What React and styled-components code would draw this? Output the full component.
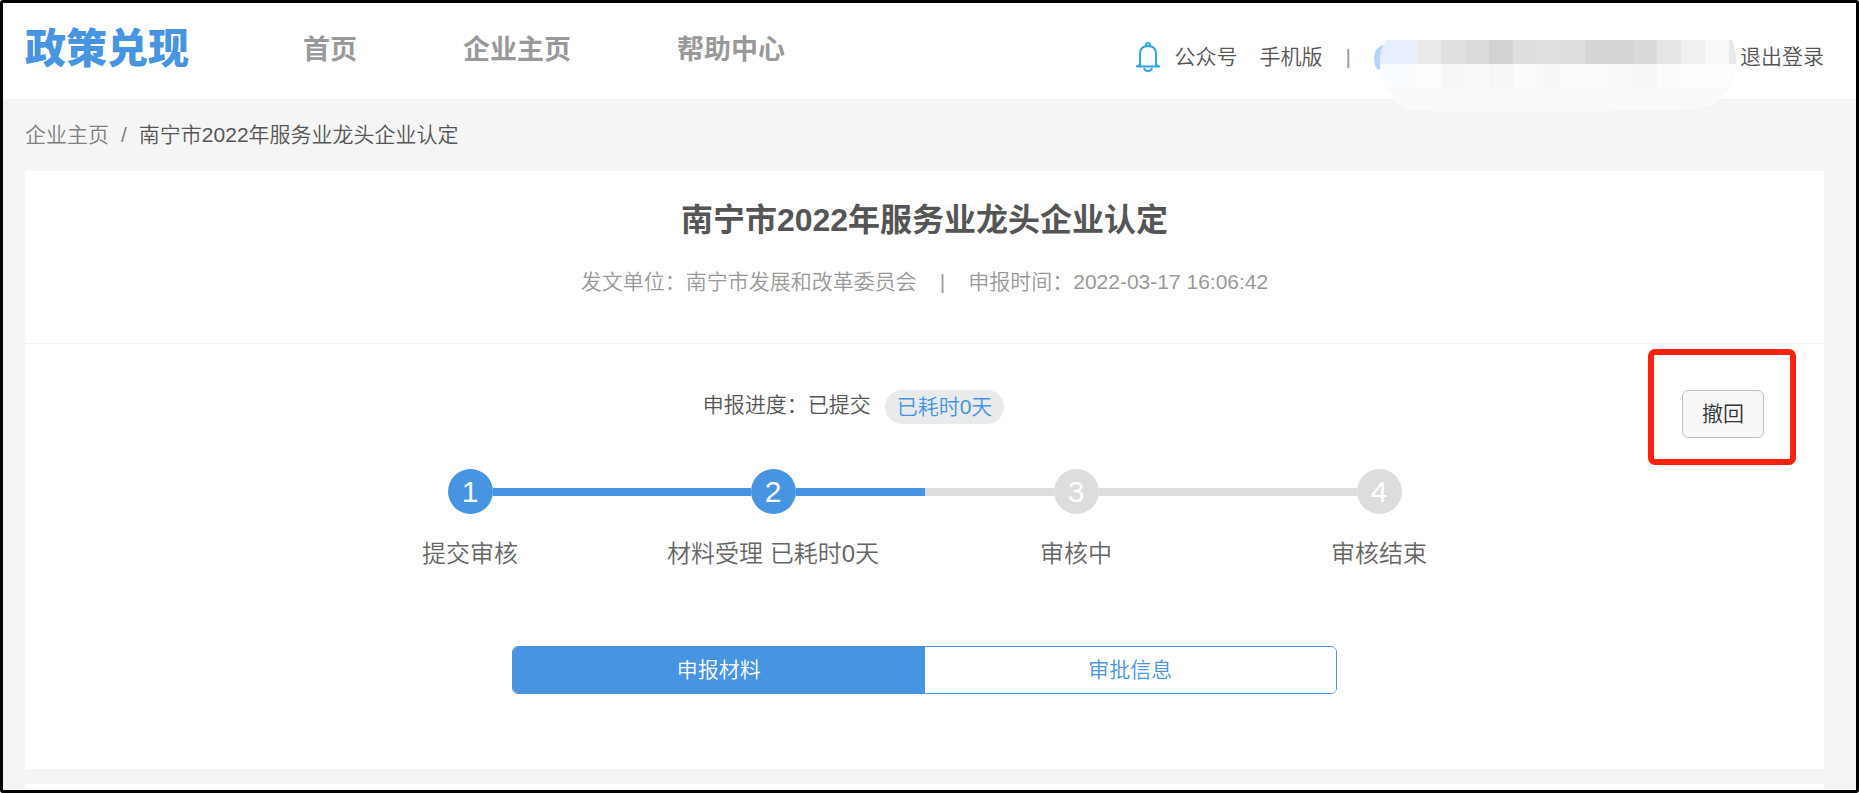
import React from 'react';
import styled, { createGlobalStyle } from 'styled-components';

const GlobalStyle = createGlobalStyle`
  * {
    box-sizing: border-box;
  }

  body {
    margin: 0;
    background: #fff;
    color: #555;
    font-family: 'Liberation Sans', 'Noto Sans CJK SC', sans-serif;
    font-size: 21px;
    font-weight: 350;
    line-height: 30px;
  }

  a {
    color: inherit;
    text-decoration: none;
  }

  button {
    font: inherit;
    cursor: pointer;
  }
`;

const Page = styled.div`
  display: flex;
  flex-direction: column;
  min-height: 100vh;
  border: 3px solid #000;
  border-radius: 3px;
  background: #f5f5f5;
`;

const Header = styled.header`
  display: flex;
  align-items: center;
  height: 96px;
  padding: 0 32px 0 22px;
  background: #fff;
  white-space: nowrap;
`;

const Logo = styled.a`
  padding-bottom: 4px;
  color: #4794e2;
  font-size: 41px;
  font-weight: 900;
  line-height: 48px;
`;

const Nav = styled.nav`
  display: flex;
  gap: 106px;
  margin-left: 114px;
  padding-bottom: 2px;
  color: #999;
  font-size: 27px;
  font-weight: bold;
`;

const Account = styled.div`
  display: flex;
  align-items: center;
  margin-left: auto;
  padding-top: 12px;
`;

const BellIcon = styled.svg`
  width: 24px;
  height: 30px;
  margin-right: 15px;
`;

const AccountLink = styled.a`
  margin-right: 22px;
`;

const Separator = styled.span`
  margin: 0 23px;
  color: #999;
`;

const UserName = styled.div`
  position: relative;
  width: 366px;
  height: 30px;
`;

const Mosaic = styled.svg`
  position: absolute;
  top: -28px;
  left: 0;
  width: 366px;
  height: 100px;
`;

const Breadcrumb = styled.nav`
  display: flex;
  gap: 12px;
  padding: 21px 22px;
`;

const Parent = styled.a`
  color: #808080;
`;

const Slash = styled.span`
  color: #808080;
`;

const Card = styled.section`
  margin: 0 32px 15px 22px;
  background: #fff;
`;

const NextCard = styled(Card)`
  flex: 1;
  min-height: 6px;
  margin-bottom: 0;
`;

const Heading = styled.div`
  padding: 26px 0 46px;
  border-bottom: 1px solid #f0f0f0;
  text-align: center;
`;

const Title = styled.h1`
  margin: 0 0 24px;
  font-size: 32px;
  font-weight: bold;
  line-height: 46px;
`;

const Meta = styled.div`
  display: flex;
  justify-content: center;
  color: #999;
`;

const Progress = styled.div`
  display: flex;
  align-items: flex-start;
  padding: 46px 60px 31px 0;
`;

const Status = styled.div`
  display: flex;
  flex: 1;
  justify-content: center;
  gap: 14px;
`;

const Elapsed = styled.span`
  height: 34px;
  padding: 0 12px;
  border-radius: 17px;
  background: #e8eaec;
  color: #4794e2;
  line-height: 34px;
`;

const Highlight = styled.div`
  position: relative;

  &::after {
    content: '';
    position: absolute;
    inset: -41px -32px -27px -34px;
    border: 6px solid #ff2010;
    border-radius: 7px;
    pointer-events: none;
  }
`;

const WithdrawButton = styled.button`
  width: 82px;
  height: 48px;
  padding: 0;
  border: 1px solid #bfc1c9;
  border-radius: 6px;
  background: #f7f7f8;
  color: #333;
`;

const Steps = styled.ol`
  display: flex;
  max-width: 1212px;
  margin: 0 auto;
  padding: 0;
  list-style: none;
`;

const Step = styled.li`
  flex: 1;
  color: #666;
  font-size: 24px;
  line-height: 36px;
  text-align: center;
`;

const Track = styled.div`
  display: flex;
  align-items: center;
  margin-bottom: 22px;
`;

const Line = styled.span`
  flex: 1;
  height: 8px;
  background: ${({ $state }) =>
    ({ done: '#4794e2', todo: '#ddd', none: 'transparent' })[$state]};
`;

const Dot = styled.span`
  width: 45px;
  height: 45px;
  border-radius: 50%;
  background: ${({ $done }) => ($done ? '#4794e2' : '#ddd')};
  color: #fff;
  font-size: 30px;
  line-height: 45px;
`;

const Tabs = styled.div`
  display: flex;
  max-width: 825px;
  margin: 74px auto 75px;
  border: 1px solid #4794e2;
  border-radius: 6px;
  overflow: hidden;
`;

const Tab = styled.button`
  flex: 1;
  height: 46px;
  padding: 0;
  border: 0;
  background: ${({ $active }) => ($active ? '#4794e2' : '#fff')};
  color: ${({ $active }) => ($active ? '#fff' : '#4794e2')};
`;

const steps = [
  { label: '提交审核', before: 'none', after: 'done', done: true },
  { label: '材料受理 已耗时0天', before: 'done', after: 'done', done: true },
  { label: '审核中', before: 'todo', after: 'todo' },
  { label: '审核结束', before: 'todo', after: 'none' },
];

const upperTiles = [
  '#e5efff', '#e8f0ff', '#ebeae8', '#dfe0e1', '#dbdcd9', '#d3d3d3', '#dedede', '#e0e0e0',
  '#dedede', '#d6d6d6', '#d4d4d4', '#dadada', '#e5e6e4', '#eff1f0', '#f9f9f9', '#e9e9e7',
];

const lowerTiles = [
  '#fafdff', '#fafdff', '#fdfdfd', '#f7f7f7', '#fafafa', '#f6f6f6', '#fbfbfb', '#f8f8f8',
  '#fafcfb', '#fafbfb', '#f9f9f9', '#f8f8f8', '#fcfcfc', '#fdfdfd', '#fdfdfd', '#fcfcfc',
];

function Bell() {
  return (
    <BellIcon viewBox="0 0 24 30" fill="none" stroke="#2fa3e0" strokeWidth="2" aria-hidden="true">
      <path d="M4 23V12c0-5 3-8 8-8s8 3 8 8v11l3 1.500H1z" strokeLinejoin="round" />
      <path d="M10 4V3a2 2 0 0 1 4 0v1M8 26c1 4 7 4 8 0" />
    </BellIcon>
  );
}

function MaskedName() {
  return (
    <Mosaic viewBox="0 0 366 100" aria-hidden="true">
      <clipPath id="brush">
        <path d="M12 26H358Q362 34 362 46C362 70 350 94 318 95L206 98H72L36 96C16 90 6 64 6 48Q6 36 12 26Z" />
      </clipPath>
      <path d="M9 31Q0 34 0 44Q0 52 4 56L8 54Z" fill="#b8d3ff" />
      <g clipPath="url(#brush)">
        <rect width="366" height="100" fill="#fafafa" />
        {upperTiles.map((fill, i) => (
          <rect key={i} x={i * 24 - 5} y="26" width="24" height="24" fill={fill} />
        ))}
        {lowerTiles.map((fill, i) => (
          <rect key={i} x={i * 24 - 5} y="50" width="24" height="24" fill={fill} />
        ))}
      </g>
    </Mosaic>
  );
}

function App() {
  return (
    <>
      <GlobalStyle />
      <Page>
        <Header>
          <Logo href="#">政策兑现</Logo>
          <Nav>
            <a href="#">首页</a>
            <a href="#">企业主页</a>
            <a href="#">帮助中心</a>
          </Nav>
          <Account>
            <Bell />
            <AccountLink href="#">公众号</AccountLink>
            <a href="#">手机版</a>
            <Separator>|</Separator>
            <UserName>
              <MaskedName />
            </UserName>
            <a href="#">退出登录</a>
          </Account>
        </Header>

        <Breadcrumb>
          <Parent href="#">企业主页</Parent>
          <Slash>/</Slash>
          <span>南宁市2022年服务业龙头企业认定</span>
        </Breadcrumb>

        <Card>
          <Heading>
            <Title>南宁市2022年服务业龙头企业认定</Title>
            <Meta>
              <span>发文单位：南宁市发展和改革委员会</span>
              <Separator>|</Separator>
              <span>申报时间：2022-03-17 16:06:42</span>
            </Meta>
          </Heading>

          <Progress>
            <Status>
              <span>申报进度：已提交</span>
              <Elapsed>已耗时0天</Elapsed>
            </Status>
            <Highlight>
              <WithdrawButton type="button">撤回</WithdrawButton>
            </Highlight>
          </Progress>

          <Steps>
            {steps.map(({ label, before, after, done }, i) => (
              <Step key={label}>
                <Track>
                  <Line $state={before} />
                  <Dot $done={done}>{i + 1}</Dot>
                  <Line $state={after} />
                </Track>
                {label}
              </Step>
            ))}
          </Steps>

          <Tabs>
            <Tab type="button" $active>
              申报材料
            </Tab>
            <Tab type="button">审批信息</Tab>
          </Tabs>
        </Card>
        <NextCard />
      </Page>
    </>
  );
}

export default App;
